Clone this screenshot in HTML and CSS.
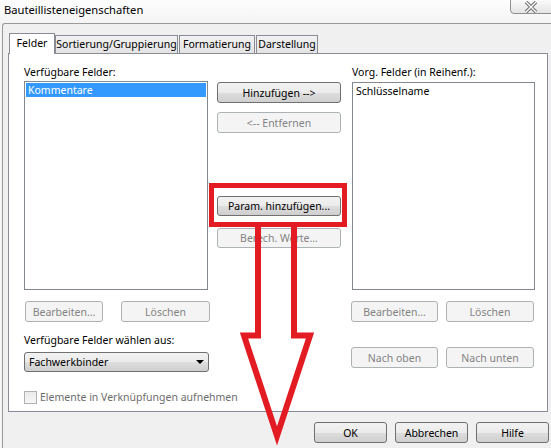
FILE: index.html
```html
<!DOCTYPE html>
<html lang="de">
	<head>
		<meta charset="UTF-8" />
		<title>Bauteillisteneigenschaften</title>
		<link rel="stylesheet" href="styles.css">
	</head>
	<body>
		<div class="window">
			<div class="titlebar">
				<span class="title">Bauteillisteneigenschaften</span>
				<div class="close">
					<svg width="14" height="12" viewBox="0 0 14 12">
						<path d="M2 1 L12 11 M12 1 L2 11" stroke="#6e6e6e" stroke-width="3.4" />
						<path d="M2 1 L12 11 M12 1 L2 11" stroke="#ffffff" stroke-width="1.4" />
					</svg>
				</div>
			</div>

			<div class="client">
				<div class="tabs">
					<div class="tab active">Felder</div>
					<div class="tab w-sort">Sortierung/Gruppierung</div>
					<div class="tab w-form">Formatierung</div>
					<div class="tab w-dar">Darstellung</div>
				</div>

				<div class="page">
					<div class="col col-left">
						<div class="label">Verfügbare Felder:</div>
						<div class="listbox list-left">
							<div class="item selected">Kommentare</div>
						</div>
						<div class="btn-row">
							<button class="btn disabled b-edit-l">Bearbeiten...</button>
							<button class="btn disabled b-del-l">Löschen</button>
						</div>
						<div class="label label-source">Verfügbare Felder wählen aus:</div>
						<div class="select">
							<span>Fachwerkbinder</span>
							<span class="caret"></span>
						</div>
						<label class="check">
							<span class="box"></span>
							<span>Elemente in Verknüpfungen aufnehmen</span>
						</label>
					</div>

					<div class="col col-mid">
						<button class="btn b-add">Hinzufügen --&gt;</button>
						<button class="btn disabled b-remove">&lt;-- Entfernen</button>
						<button class="btn b-param">Param. hinzufügen...</button>
						<button class="btn disabled b-calc">Berech. Werte...</button>
					</div>

					<div class="col col-right">
						<div class="label">Vorg. Felder (in Reihenf.):</div>
						<div class="listbox list-right">
							<div class="item">Schlüsselname</div>
						</div>
						<div class="btn-row">
							<button class="btn disabled b-edit-r">Bearbeiten...</button>
							<button class="btn disabled b-del-r">Löschen</button>
						</div>
						<div class="btn-row row-order">
							<button class="btn disabled b-edit-r">Nach oben</button>
							<button class="btn disabled b-del-r">Nach unten</button>
						</div>
					</div>
				</div>

				<div class="footer">
					<button class="btn b-foot">OK</button>
					<button class="btn b-foot">Abbrechen</button>
					<button class="btn b-foot">Hilfe</button>
				</div>
			</div>

			<svg class="markup" width="551" height="448" viewBox="0 0 551 448">
				<rect x="211.5" y="185.5" width="133" height="39" fill="none" stroke="#e31b23" stroke-width="5" />
				<polyline points="258,227 258,335.5 244,335.5 277,436 310,335.5 294,335.5 294,227" fill="none" stroke="#e31b23" stroke-width="6" stroke-linejoin="miter" />
			</svg>
		</div>
	</body>
</html>
```

FILE: styles.css
```css
* {
	box-sizing: border-box;
}
body {
	margin: 0;
	font-family: "Noto Sans", "Open Sans", sans-serif;
	font-size: 10.5px;
	color: #000;
}
.window {
	position: relative;
	width: 551px;
	height: 448px;
	overflow: hidden;
	background: linear-gradient(#fdfdfd, #f4f4f4 23px);
}
.titlebar {
	display: flex;
	justify-content: space-between;
	height: 23px;
}
.title {
	padding: 2px 0 0 4px;
	font-size: 11.2px;
	line-height: 16px;
}
.close {
	display: flex;
	align-items: center;
	justify-content: center;
	width: 42px;
	height: 15px;
	margin-top: -1px;
	margin-right: -1px;
	border: 1px solid #8e8f8f;
	border-bottom-left-radius: 4px;
	background: linear-gradient(#fbfbfb, #e4e4e4);
}
.client {
	height: 425px;
	margin-left: 2px;
	border-top: 1px solid #9a9a9a;
	border-left: 1px solid #9a9a9a;
	border-top-left-radius: 3px;
	background: #f0f0f0;
}
.tabs {
	display: flex;
	align-items: flex-end;
	height: 30px;
	padding-left: 6px;
	position: relative;
	z-index: 1;
	margin-bottom: -1px;
}
.tab {
	height: 18px;
	border: 1px solid #898c95;
	border-bottom: none;
	background: linear-gradient(#f2f2f2, #e3e3e3);
	text-align: center;
	line-height: 16px;
	white-space: nowrap;
	margin-bottom: 1px;
}
.tab.active {
	width: 46px;
	height: 21px;
	margin-bottom: 0;
	background: #fff;
	line-height: 18px;
}
.w-sort {
	width: 123px;
}
.w-form {
	width: 76px;
	margin-left: 1px;
}
.w-dar {
	width: 62px;
	margin-left: 1px;
}
.page {
	display: flex;
	width: 540px;
	height: 359px;
	margin-left: 5px;
	padding-left: 15px;
	border: 1px solid #898c95;
	background: #fff;
}
.col {
	display: flex;
	flex-direction: column;
	align-items: flex-start;
}
.col-left {
	width: 185px;
}
.col-mid {
	width: 124px;
	margin-left: 8px;
}
.col-right {
	width: 184px;
	margin-left: 10px;
}
.label {
	height: 14px;
	margin-top: 11px;
	line-height: 14px;
	white-space: nowrap;
}
.col-right .label {
	padding-left: 1px;
}
.listbox {
	border: 1px solid #828790;
	padding: 1px;
	background: #fff;
}
.list-left {
	width: 184px;
	height: 209px;
	margin-top: 2px;
}
.list-right {
	width: 183px;
	height: 208px;
	margin-top: 3px;
	margin-left: 1px;
}
.item {
	height: 14px;
	padding-left: 2px;
	line-height: 14px;
}
.item.selected {
	background: #3399ff;
	color: #fff;
}
.btn-row {
	display: flex;
	margin-top: 11px;
}
.row-order {
	margin-top: 25px;
}
.btn {
	height: 21px;
	padding: 0;
	border: 1px solid #707070;
	border-radius: 3px;
	background: linear-gradient(#f2f2f2 0%, #ebebeb 50%, #dddddd 51%, #cfcfcf 100%);
	font: inherit;
	color: #000;
	line-height: 18px;
	text-align: center;
	white-space: nowrap;
}
.btn.disabled {
	border-color: #adb2b5;
	background: #f4f4f4;
	color: #838383;
}
.b-edit-l {
	width: 78px;
	margin-left: 1px;
}
.b-del-l {
	width: 89px;
	margin-left: 18px;
}
.b-edit-r {
	width: 87px;
}
.b-del-r {
	width: 88px;
	margin-left: 8px;
}
.col-mid .btn {
	width: 124px;
}
.b-add {
	margin-top: 28px;
}
.b-remove {
	margin-top: 9px;
}
.b-param {
	height: 20px;
	margin-top: 63px;
}
.b-calc {
	height: 20px;
	margin-top: 12px;
}
.label-source {
	margin-top: 11px;
}
.select {
	display: flex;
	align-items: center;
	justify-content: space-between;
	width: 185px;
	height: 20px;
	margin-top: 5px;
	padding: 0 4px 0 4px;
	border: 1px solid #707070;
	border-radius: 3px;
	background: linear-gradient(#f2f2f2 0%, #ebebeb 50%, #dddddd 51%, #cfcfcf 100%);
}
.caret {
	width: 0;
	height: 0;
	border-left: 4px solid transparent;
	border-right: 4px solid transparent;
	border-top: 4px solid #000;
}
.check {
	display: flex;
	align-items: center;
	gap: 3px;
	margin-top: 18px;
	color: #6d6d6d;
	white-space: nowrap;
}
.check .box {
	width: 13px;
	height: 13px;
	border: 1px solid #b1b1b1;
	background: linear-gradient(#ebebeb, #f7f7f7);
}
.footer {
	display: flex;
	justify-content: flex-end;
	gap: 8px;
	padding: 10px 2px 0 0;
}
.b-foot {
	width: 73px;
}
.markup {
	position: absolute;
	top: 0;
	left: 0;
	pointer-events: none;
}
```
